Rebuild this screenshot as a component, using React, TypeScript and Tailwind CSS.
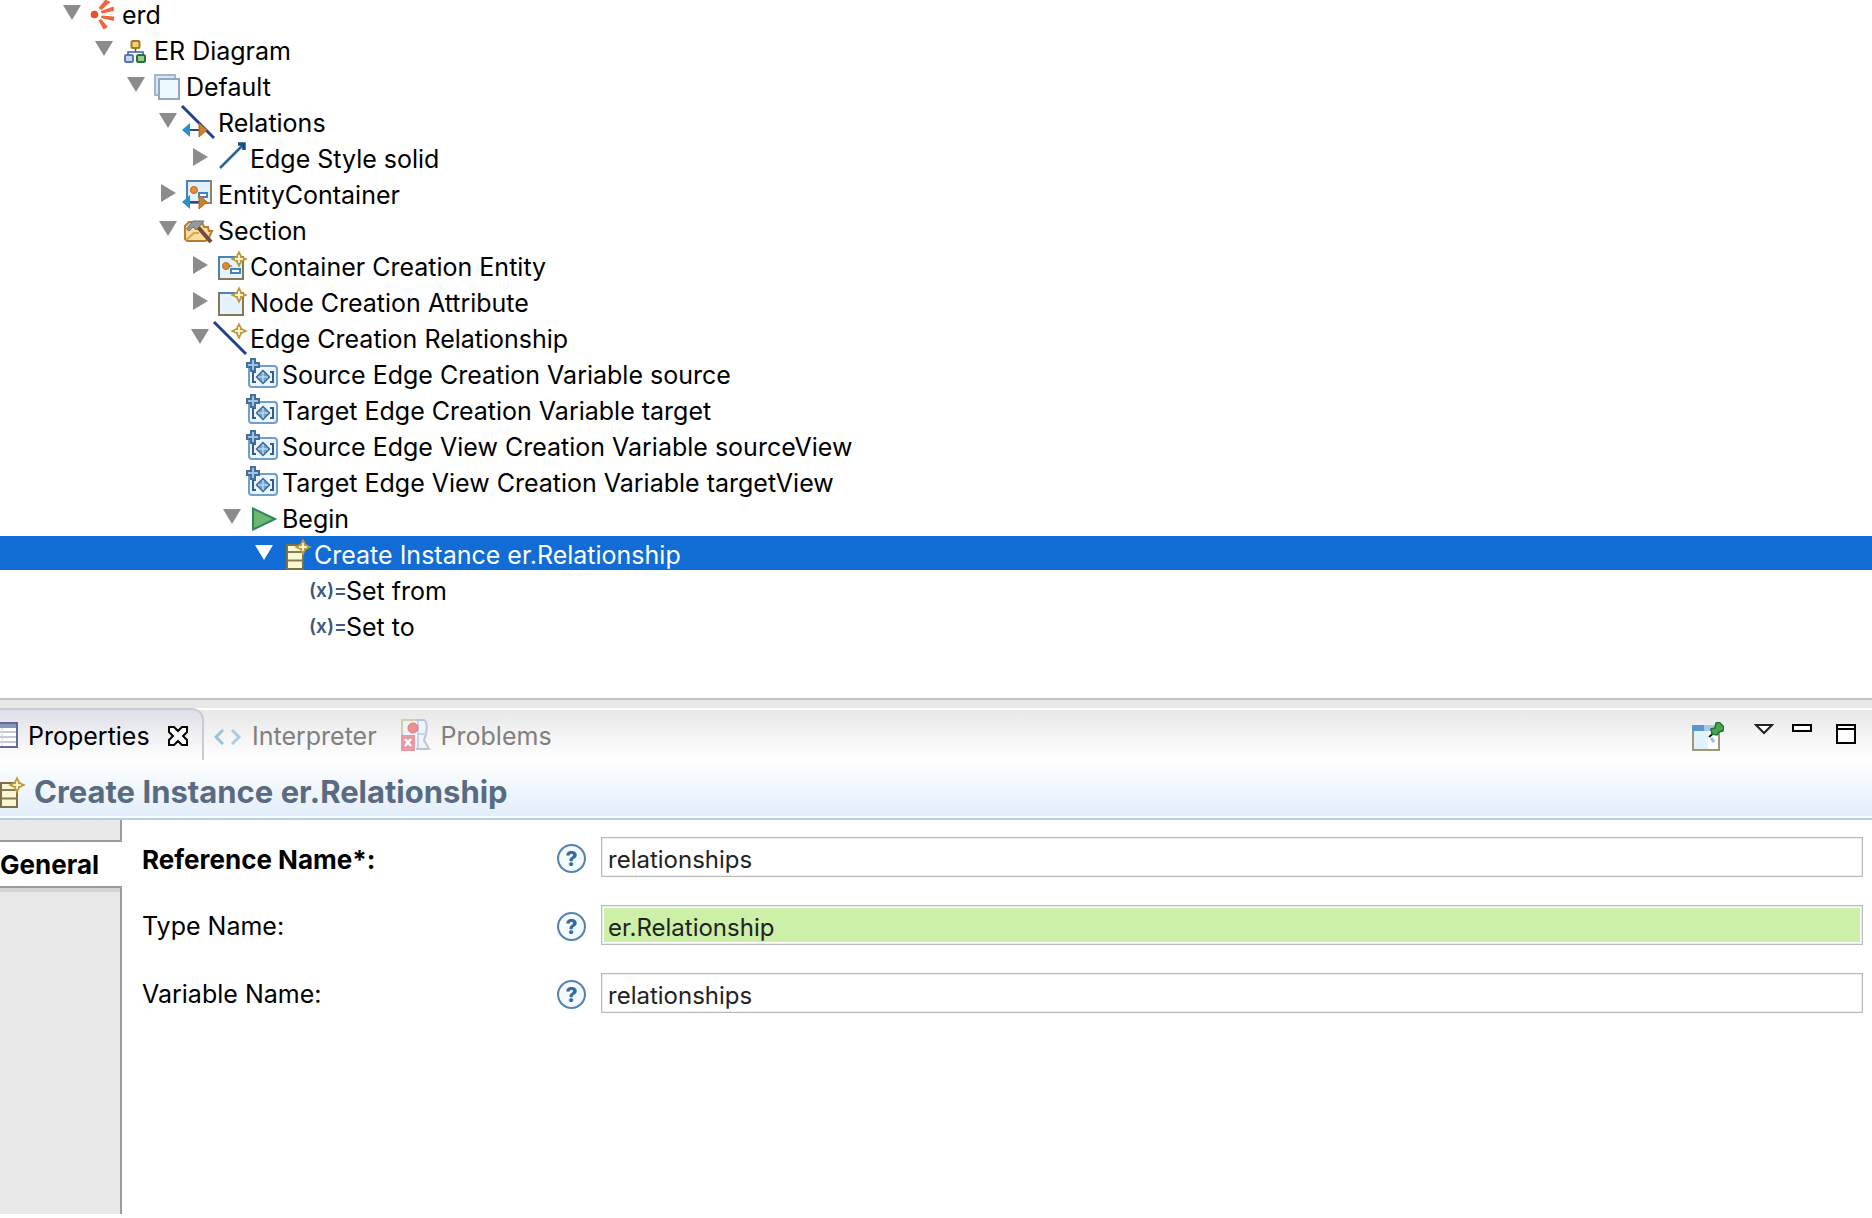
import React, { useState } from 'react';
import clsx from 'clsx';

type IconName =
  | 'model' | 'diagram' | 'layer' | 'relations' | 'edgeStyle' | 'container' | 'section'
  | 'containerCreation' | 'nodeCreation' | 'edgeCreation' | 'variable' | 'begin' | 'instance' | 'set';

interface TreeNode {
  id: string;
  label: string;
  icon: IconName;
  open?: boolean;
  children?: TreeNode[];
}

const tree: TreeNode[] = [
  {
    id: 'erd', label: 'erd', icon: 'model', open: true, children: [
      {
        id: 'diagram', label: 'ER Diagram', icon: 'diagram', open: true, children: [
          {
            id: 'default', label: 'Default', icon: 'layer', open: true, children: [
              {
                id: 'relations', label: 'Relations', icon: 'relations', open: true, children: [
                  { id: 'edge-style', label: 'Edge Style solid', icon: 'edgeStyle', children: [] },
                ],
              },
              { id: 'entity', label: 'EntityContainer', icon: 'container', children: [] },
              {
                id: 'section', label: 'Section', icon: 'section', open: true, children: [
                  { id: 'cc', label: 'Container Creation Entity', icon: 'containerCreation', children: [] },
                  { id: 'nc', label: 'Node Creation Attribute', icon: 'nodeCreation', children: [] },
                  {
                    id: 'ec', label: 'Edge Creation Relationship', icon: 'edgeCreation', open: true, children: [
                      { id: 'v1', label: 'Source Edge Creation Variable source', icon: 'variable' },
                      { id: 'v2', label: 'Target Edge Creation Variable target', icon: 'variable' },
                      { id: 'v3', label: 'Source Edge View Creation Variable sourceView', icon: 'variable' },
                      { id: 'v4', label: 'Target Edge View Creation Variable targetView', icon: 'variable' },
                      {
                        id: 'begin', label: 'Begin', icon: 'begin', open: true, children: [
                          {
                            id: 'create', label: 'Create Instance er.Relationship', icon: 'instance', open: true, children: [
                              { id: 'set-from', label: 'Set from', icon: 'set' },
                              { id: 'set-to', label: 'Set to', icon: 'set' },
                            ],
                          },
                        ],
                      },
                    ],
                  },
                ],
              },
            ],
          },
        ],
      },
    ],
  },
];

const Star = () => (
  <>
    <path d="M25 3l2 4 4 2-4 2-2 4-2-4-4-2 4-2z" fill="#f3dfa0" stroke="#bd9a3a" strokeWidth="2.500" />
    <path d="M25 5v8M21 9h8" stroke="#fffbe6" strokeWidth="1.500" />
  </>
);

const Swap = () => (
  <>
    <path d="M8 24h9" stroke="#2d4a78" strokeWidth="2" />
    <path d="M0 24l8-7v14z" fill="#2390cf" />
    <path d="M17 17l8 7-8 7z" fill="#c9812c" stroke="#a8671f" />
  </>
);

const icons: Record<IconName, React.ReactNode> = {
  model: (
    <g fill="#f0653c">
      <circle cx="8.500" cy="16.500" r="3.800" fill="#e8502c" />
      <path d="M12.500 10l7-8.500 5 2.500-9 8z" />
      <path d="M15 13l12.500-4.500.500 4.500-12.500 2.500z" />
      <path d="M15.500 17.500l12.500 1v4.500l-13-3z" />
      <path d="M15 21l7 8-4.500 2.500-5-9z" />
    </g>
  ),
  diagram: (
    <>
      <path d="M17.500 14v4M10 22v-4h15v4" fill="none" stroke="#3a6096" strokeWidth="1.500" />
      <rect x="13.500" y="7" width="8" height="7" rx="1.500" fill="#f3d27c" stroke="#a8781c" strokeWidth="2" />
      <rect x="7" y="21" width="8" height="7" rx="1.500" fill="#c5d6f2" stroke="#5a76ad" strokeWidth="2" />
      <rect x="19" y="21" width="8" height="7" rx="1.500" fill="#9ccb86" stroke="#237043" strokeWidth="2" />
    </>
  ),
  layer: (
    <>
      <rect x="5" y="5" width="20" height="20" fill="#cfeaf6" stroke="#a3b4cc" strokeWidth="2" />
      <rect x="9" y="9" width="20" height="20" fill="#ecf9ff" stroke="#97a4bd" strokeWidth="2" />
    </>
  ),
  relations: (
    <>
      <path d="M0 0l32 32" stroke="#24408f" strokeWidth="3" />
      <Swap />
    </>
  ),
  edgeStyle: (
    <>
      <path d="M6 26L30 2" stroke="#2a6496" strokeWidth="2.500" />
      <path d="M24 2h6v6" fill="none" stroke="#14507f" strokeWidth="3.500" />
    </>
  ),
  container: (
    <>
      <rect x="5" y="3" width="24" height="23" fill="#e3effb" />
      <path d="M5 26V3h24" fill="none" stroke="#4a82b4" strokeWidth="2" />
      <path d="M29 2v23H5" fill="none" stroke="#8a8472" strokeWidth="2" />
      <circle cx="12" cy="12" r="3.500" fill="#e0913a" stroke="#b06a1c" />
      <rect x="17" y="15" width="8" height="4" fill="#fff" stroke="#4484bd" strokeWidth="2" />
      <Swap />
    </>
  ),
  section: (
    <>
      <path d="M3 25V12l4-4h13l2 5h4l1 4h3l-4 9-3 1H5z" fill="#fbdc98" stroke="#bd7a34" strokeWidth="2" />
      <path d="M4 26l8-7h5" fill="none" stroke="#d8a250" strokeWidth="2" />
      <path d="M15 12l14 16" stroke="#74493c" strokeWidth="4" />
      <path d="M4.500 15L11 7h11l-4 5-4 4-3-3-4 4z" fill="#96999b" stroke="#6f7375" />
    </>
  ),
  containerCreation: (
    <>
      <rect x="5" y="7" width="24" height="22" fill="#e6f2fc" stroke="#85795a" strokeWidth="2" />
      <path d="M4 7h17M5 7v20" stroke="#4d84ad" strokeWidth="2" />
      <circle cx="12" cy="16" r="3.500" fill="#de8b2f" stroke="#b3702a" />
      <path d="M15 16h3" stroke="#555" />
      <rect x="17" y="19" width="9" height="4" fill="#fff" stroke="#4484bd" strokeWidth="2" />
      <Star />
    </>
  ),
  nodeCreation: (
    <>
      <rect x="5" y="7" width="24" height="22" fill="#e6f2fc" stroke="#85795a" strokeWidth="2" />
      <path d="M4 7h17" stroke="#4d84ad" strokeWidth="2" />
      <Star />
    </>
  ),
  edgeCreation: (
    <>
      <path d="M0 0l32 32" stroke="#24408f" strokeWidth="3" />
      <Star />
    </>
  ),
  variable: (
    <>
      <rect x="3" y="8" width="28" height="21" rx="3" fill="#eef6fd" stroke="#6f9fcb" strokeWidth="2" />
      <path d="M10 14H7v10h3M24 14h3v10h-3" fill="none" stroke="#365a8c" strokeWidth="2" />
      <path d="M17 12.500l6.500 6.500-6.500 6.500-6.500-6.500z" fill="#6fa3d0" stroke="#3b6c9e" strokeWidth="1.500" />
      <path d="M17 14v10M12 19h10" stroke="#d8eaf8" strokeWidth="1" />
      <path d="M5 1h4v4h4v4H9v4H5V9H1V5h4z" fill="#a5c3de" stroke="#41709c" strokeWidth="2" />
    </>
  ),
  begin: (
    <path d="M7 6.500v21l22-10.500z" fill="#6cb873" stroke="#2f8556" strokeWidth="2" />
  ),
  instance: (
    <>
      <rect x="9" y="7" width="16" height="24" fill="#f8f7d2" stroke="#7d7044" strokeWidth="2" />
      <path d="M9 14h16M9 22.500h16" stroke="#857a52" strokeWidth="2" />
      <Star />
    </>
  ),
  set: (
    <text x="-1" y="23" fontSize="19" fontWeight="600" fill="#3d5878">(x)=</text>
  ),
};

const Icon = ({ name, className }: { name: IconName; className?: string }) => (
  <svg viewBox="0 0 32 32" className={clsx('w-8 h-8 shrink-0 overflow-visible', className)} aria-hidden="true">
    {icons[name]}
  </svg>
);

interface RowProps {
  node: TreeNode;
  depth: number;
  selected: string;
  onSelect: (id: string) => void;
}

const TreeRow: React.FC<RowProps> = ({ node, depth, selected, onSelect }) => {
  const [open, setOpen] = useState(!!node.open);
  const active = selected === node.id;

  return (
    <li role="treeitem" aria-expanded={node.children ? open : undefined} aria-selected={active}>
      <div
        onClick={() => onSelect(node.id)}
        className={clsx('flex items-end h-[34px] mb-0.5 cursor-default', active ? 'bg-[#116cd6] text-white' : 'text-black')}
        style={{ paddingLeft: 63 + depth * 32 }}
      >
        <div className="flex items-center justify-center w-[18px] h-[34px] mr-[5px] shrink-0">
          {node.children && (
            <button
              aria-label={`Toggle ${node.label}`}
              onClick={(e) => { e.stopPropagation(); setOpen(!open); }}
              className={active ? 'text-white' : 'text-[#8c8c8c]'}
            >
              <svg viewBox="0 0 18 18" className="w-[18px] h-[18px] block" fill="currentColor">
                <path d={open ? 'M0 1h18L9 16z' : 'M2 0v18l15-9z'} />
              </svg>
            </button>
          )}
        </div>
        <Icon name={node.icon} />
        <span className="pl-1 leading-[30px] whitespace-nowrap">{node.label}</span>
      </div>
      {open && node.children && node.children.length > 0 && (
        <ul role="group">
          {node.children.map((child) => (
            <TreeRow key={child.id} node={child} depth={depth + 1} selected={selected} onSelect={onSelect} />
          ))}
        </ul>
      )}
    </li>
  );
};

const ViewTabs = () => (
  <div className="flex h-[52px] border-t-2 border-white bg-linear-to-b from-[#e8e8e8] to-white">
    <div className="flex items-center w-[204px] h-[52px] -mt-0.5 border-t-2 border-r-2 border-[#cacbd6] rounded-tr-xl bg-linear-to-b from-[#dfe0e8] to-white">
      <svg viewBox="0 0 18 26" className="w-[18px] h-[26px] shrink-0" aria-hidden="true">
        <path d="M-2 1h19v24H-2z" fill="#fff" stroke="#5f6c96" strokeWidth="2" />
        <path d="M0 2h16v4H0z" fill="#8b98bd" />
        <path d="M0 10h16M0 15h16M0 20h16" stroke="#c3cad9" strokeWidth="2" />
        <path d="M2 6v18" stroke="#d4dae6" />
      </svg>
      <button className="pt-1 ml-2.5 text-black">Properties</button>
      <button aria-label="Close Properties" className="pt-0.5 ml-auto mr-3.5">
        <svg viewBox="0 0 20 20" className="w-5 h-5 block" fill="#fff" stroke="#000" strokeWidth="2">
          <path d="M1 1h5l4 4 4-4h5v5l-4 4 4 4v5h-5l-4-4-4 4H1v-5l4-4-4-4z" />
        </svg>
      </button>
    </div>
    <button className="flex items-center pl-2.5 text-[#808080]">
      <svg viewBox="0 0 28 16" className="w-7 h-4 mt-1 mr-2.5" fill="none" stroke="#9cc3dc" strokeWidth="3">
        <path d="M9 1L2 8l7 7" />
        <path d="M18 1l7 7-7 7" stroke="#a9cbe6" />
      </svg>
      <span className="pt-1">Interpreter</span>
    </button>
    <button className="flex items-center pl-6 text-[#808080]">
      <svg viewBox="0 0 32 32" className="w-8 h-8 mr-2">
        <path d="M1 16V1h22c5 3 2 16 0 20l5 9H15" fill="#eef3f9" stroke="#bcc6d4" strokeWidth="2" />
        <path d="M1 14V1h14" fill="none" stroke="#d3cfae" strokeWidth="2" />
        <path d="M17 2v27M17 15h8" stroke="#c2d6ea" strokeWidth="2" />
        <circle cx="12" cy="9" r="5" fill="#ec8f94" stroke="#e3767c" />
        <rect x="0" y="16" width="14" height="16" fill="#e89aa2" />
        <path d="M4 20l6 7M10 20l-6 7" stroke="#fff" strokeWidth="2.500" />
      </svg>
      <span className="pt-1">Problems</span>
    </button>
    <div className="flex items-start ml-auto pt-3 pr-4">
      <button aria-label="Pin to selection" className="mr-[30px]">
        <svg viewBox="0 0 32 30" className="w-8 h-[30px]">
          <rect x="1" y="4" width="26" height="24" fill="#fff" stroke="#a0977a" strokeWidth="2" />
          <path d="M2 8h14v19H2z" fill="#dff3fd" />
          <path d="M0 3h28v6H0z" fill="#5f95cf" />
          <path d="M12 3h16v6H12z" fill="#a4c8e8" />
          <path d="M17 15l6-5" stroke="#111" strokeWidth="2" />
          <path d="M19 16l3 4" stroke="#9cc4d6" strokeWidth="3" />
          <path d="M19 7l4-1 1-5 3-1 5 5-1 4-4 1-2 3-5-1z" fill="#4da34f" stroke="#1c7431" strokeWidth="1.500" />
        </svg>
      </button>
      <button aria-label="View menu" className="mr-[18px] pt-0.5">
        <svg viewBox="0 0 20 12" className="w-5 h-3" fill="#fff" stroke="#222" strokeWidth="2">
          <path d="M2 1h16l-8 8z" />
        </svg>
      </button>
      <button aria-label="Minimize" className="mr-6 pt-0.5">
        <svg viewBox="0 0 20 8" className="w-5 h-2" fill="#fff" stroke="#000" strokeWidth="2">
          <rect x="1" y="1" width="18" height="6" />
        </svg>
      </button>
      <button aria-label="Maximize" className="pt-0.5">
        <svg viewBox="0 0 20 20" className="w-5 h-5" fill="#fff" stroke="#000" strokeWidth="2">
          <path d="M1 1h18v18H1zM1 5h18" />
        </svg>
      </button>
    </div>
  </div>
);

interface FieldProps {
  id: string;
  label: string;
  value: string;
  required?: boolean;
  highlight?: boolean;
}

const Field: React.FC<FieldProps> = ({ id, label, value, required, highlight }) => {
  const [text, setText] = useState(value);
  return (
    <div className="flex items-center h-10">
      <label htmlFor={id} className={clsx('w-[415px] pt-1 shrink-0', required && 'text-[26px] font-bold')}>
        {label}
      </label>
      <button aria-label={`Help for ${label}`} className="pt-0.5 mr-[15px] shrink-0">
        <svg viewBox="0 0 28 28" className="w-[29px] h-[29px] block">
          <circle cx="14" cy="14" r="13" fill="#f4f9fd" stroke="#5484ad" strokeWidth="2" />
          <text x="14" y="21" textAnchor="middle" fontSize="20" fontWeight="800" fill="#326ca0">?</text>
        </svg>
      </button>
      <div className="flex-1 min-w-0 h-10 p-px border border-[#bababa] ring-inset ring-1 ring-[#ececec]">
        <input
          id={id}
          value={text}
          onChange={(e) => setText(e.target.value)}
          className={clsx(
            'block w-full h-9 px-1 pt-1 border border-white text-2xl leading-7 text-[#222] outline-none',
            highlight ? 'bg-[#ccf0a8]' : 'bg-white',
          )}
        />
      </div>
    </div>
  );
};

export default function App() {
  const [selected, setSelected] = useState('create');

  return (
    <div className="flex flex-col min-h-screen overflow-hidden bg-white font-['Inter','Liberation_Sans',sans-serif] text-[25px] text-black">
      {/* Model tree */}
      <ul role="tree" className="-mt-1 pb-[54px]">
        {tree.map((node) => (
          <TreeRow key={node.id} node={node} depth={0} selected={selected} onSelect={setSelected} />
        ))}
      </ul>

      {/* Sash */}
      <div className="h-2.5 border-t-2 border-[#c3c3bd] bg-[#e8e8e8]" />

      {/* Properties view */}
      <ViewTabs />
      <div className="flex items-center h-[58px] pt-2 border-b-2 border-white bg-linear-to-b from-white to-[#e3eefa]">
        <Icon name="instance" className="-ml-2" />
        <h1 className="pl-2.5 text-[31px] leading-9 font-bold text-[#596b80]">
          Create Instance er.Relationship
        </h1>
      </div>
      <div className="h-0.5 bg-[#aed0f2]" />

      <div className="flex flex-1 pb-1">
        <nav className="flex flex-col w-[122px] shrink-0">
          <div className="h-5 border-r-2 border-[#9c9c9c] bg-[#e8e8e8]" />
          <button className="h-12 border-y-2 border-[#9c9c9c] bg-white text-left text-[26px] font-bold">General</button>
          <div className="flex-1 border-r-2 border-[#9c9c9c] bg-[#e8e8e8]">
            <div className="h-1 bg-[#d4d4d4]" />
          </div>
        </nav>
        <form className="flex flex-col flex-1 gap-7 pt-[17px] pl-5 pr-[9px]" onSubmit={(e) => e.preventDefault()}>
          <Field id="reference" label="Reference Name*:" value="relationships" required />
          <Field id="type" label="Type Name:" value="er.Relationship" highlight />
          <Field id="variable" label="Variable Name:" value="relationships" />
        </form>
      </div>
    </div>
  );
}
